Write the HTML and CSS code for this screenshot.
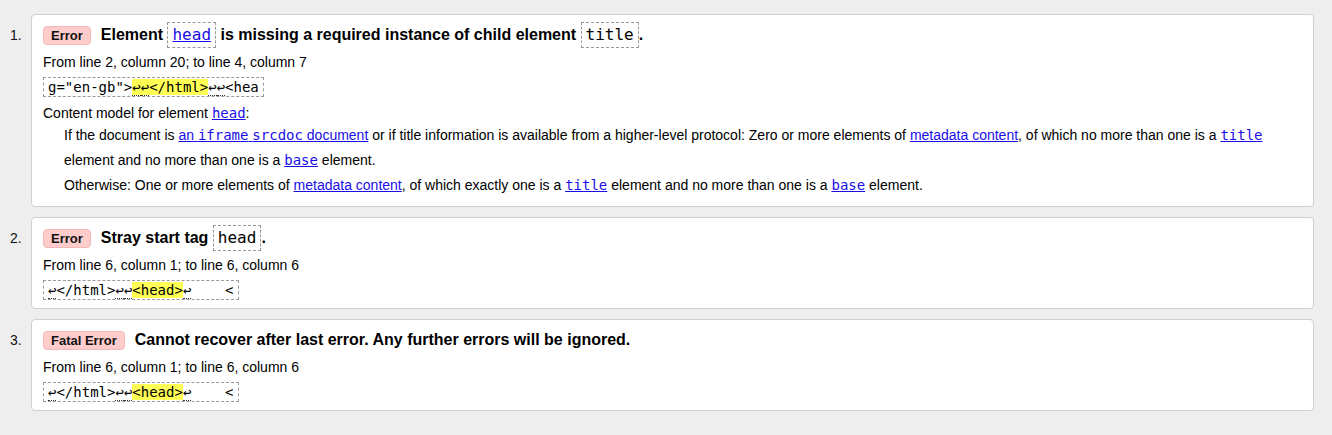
FILE: index.html
```html
<!DOCTYPE html>
<html lang="en">
<head>
<meta charset="utf-8">
<title>Validation results</title>
<link rel="stylesheet" href="styles.css">
</head>
<body>
<main class="results">
  <ol class="messages">
    <li class="message">
      <span class="num">1.</span>
      <div class="card">
        <div class="title">
          <span class="badge">Error</span>
          <span class="text">Element <code class="ref"><a href="#">head</a></code> is missing a required instance of child element <code class="ref">title</code>.</span>
        </div>
        <p class="loc">From line 2, column 20; to line 4, column 7</p>
        <div class="extract"><code>g="en-gb"&gt;<mark><span class="lf">↩</span><span class="lf">↩</span>&lt;/html&gt;</mark><span class="lf">↩</span><span class="lf">↩</span>&lt;hea</code></div>
        <div class="model">
          <p class="model-head">Content model for element <a href="#"><code>head</code></a>:</p>
          <div class="model-body">
            <p>If the document is <a href="#">an <code>iframe</code> <code>srcdoc</code> document</a> or if title information is available from a higher-level protocol: Zero or more elements of <a href="#">metadata content</a>, of which no more than one is a <a href="#"><code>title</code></a> element and no more than one is a <a href="#"><code>base</code></a> element.</p>
            <p>Otherwise: One or more elements of <a href="#">metadata content</a>, of which exactly one is a <a href="#"><code>title</code></a> element and no more than one is a <a href="#"><code>base</code></a> element.</p>
          </div>
        </div>
      </div>
    </li>
    <li class="message">
      <span class="num">2.</span>
      <div class="card">
        <div class="title">
          <span class="badge">Error</span>
          <span class="text">Stray start tag <code class="ref">head</code>.</span>
        </div>
        <p class="loc">From line 6, column 1; to line 6, column 6</p>
        <div class="extract"><code><span class="lf">↩</span>&lt;/html&gt;<span class="lf">↩</span><span class="lf">↩</span><mark>&lt;head&gt;</mark><span class="lf">↩</span>    &lt;</code></div>
      </div>
    </li>
    <li class="message">
      <span class="num">3.</span>
      <div class="card">
        <div class="title">
          <span class="badge">Fatal Error</span>
          <span class="text">Cannot recover after last error. Any further errors will be ignored.</span>
        </div>
        <p class="loc">From line 6, column 1; to line 6, column 6</p>
        <div class="extract"><code><span class="lf">↩</span>&lt;/html&gt;<span class="lf">↩</span><span class="lf">↩</span><mark>&lt;head&gt;</mark><span class="lf">↩</span>    &lt;</code></div>
      </div>
    </li>
  </ol>
</main>
</body>
</html>
```

FILE: styles.css
```css
html, body {
  margin: 0;
  padding: 0;
  background: #eeeeee;
}

body {
  font-family: "Liberation Sans", Arial, Helvetica, sans-serif;
  font-size: 14px;
  color: #000;
}

code {
  font-family: "DejaVu Sans Mono", "Liberation Mono", monospace;
  font-size: 14px;
}

a {
  color: #1a0ee8;
  text-decoration: underline;
}

.results {
  padding: 14px 18px 0 0;
}

.messages {
  list-style: none;
  margin: 0;
  padding: 0;
  display: flex;
  flex-direction: column;
  gap: 10px;
}

.message {
  display: flex;
  align-items: flex-start;
}

.num {
  width: 31px;
  flex: none;
  box-sizing: border-box;
  padding-left: 10px;
  padding-top: 13px;
  line-height: 16px;
  color: #111;
}

.card {
  flex: 1;
  background: #fff;
  border: 1px solid #cfcfcf;
  border-radius: 4px;
  padding: 7px 11px 8px 11px;
}

.title {
  display: flex;
  align-items: center;
  gap: 10px;
  height: 26px;
}

.badge {
  display: inline-block;
  box-sizing: border-box;
  height: 19px;
  line-height: 17px;
  padding: 0 7px;
  font-size: 13px;
  font-weight: bold;
  color: #111;
  background: #ffcccc;
  border: 1px solid #f2b8b8;
  border-radius: 4px;
}

.text {
  font-size: 16px;
  font-weight: bold;
  line-height: 26px;
}

.ref {
  display: inline-block;
  font-size: 16px;
  font-weight: normal;
  line-height: 18px;
  padding: 3px 4px;
  border: 1px dashed #999;
  vertical-align: middle;
  margin-top: -2px;
}

.loc {
  margin: 4px 0 0 0;
  line-height: 20px;
}

.extract {
  margin-top: 5px;
  display: inline-block;
  border: 1px dashed #999;
  padding: 0 4px;
  line-height: 18px;
}

.extract code {
  white-space: pre;
}

mark {
  background: #ffff55;
  color: #000;
}

.lf {
  border-bottom: 1px dotted #333;
}

.model {
  margin-top: 6px;
}

.model-head {
  margin: 0;
  line-height: 20px;
}

.model-body {
  padding-left: 21px;
}

.model-body p {
  margin: 0;
  line-height: 25px;
}
```
